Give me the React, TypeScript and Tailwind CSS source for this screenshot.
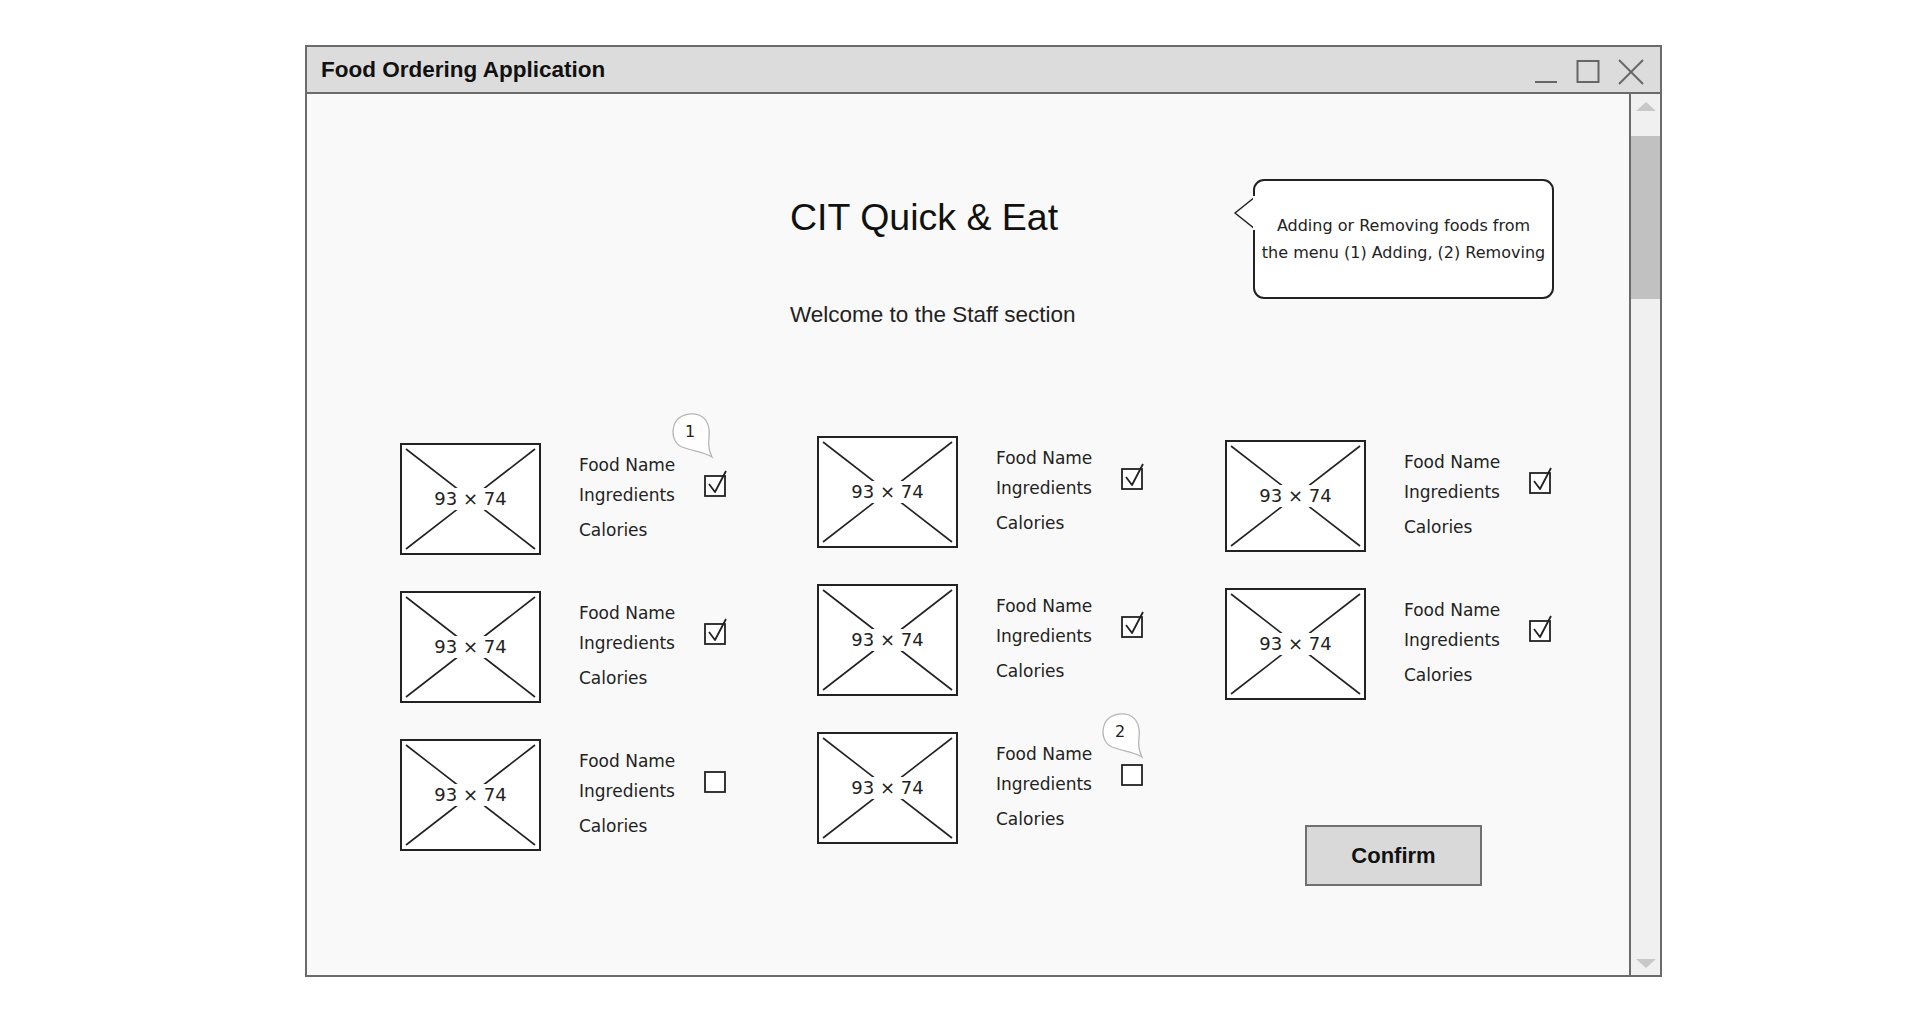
import React from 'react';

type Food = { checked: boolean; badge?: { n: string; cls: string } };

const columns: { offset: string; items: Food[] }[] = [
  {
    offset: 'mt-[7px]',
    items: [
      { checked: true, badge: { n: '1', cls: 'left-[270px] top-[-32px]' } },
      { checked: true },
      { checked: false },
    ],
  },
  {
    offset: 'mt-0',
    items: [
      { checked: true },
      { checked: true },
      { checked: false, badge: { n: '2', cls: 'left-[283px] top-[-21px]' } },
    ],
  },
  {
    offset: 'mt-[4px]',
    items: [{ checked: true }, { checked: true }],
  },
];

function Placeholder() {
  return (
    <div className="relative w-[141px] h-[112px] shrink-0 bg-white border-2 border-[#222]">
      <svg className="absolute inset-0" width="137" height="108" viewBox="0 0 137 108">
        <line x1="4" y1="4" x2="133" y2="104" stroke="#222" strokeWidth="1.6" />
        <line x1="133" y1="4" x2="4" y2="104" stroke="#222" strokeWidth="1.6" />
      </svg>
      <div className="absolute inset-0 flex items-center justify-center">
        <span className="bg-white px-[3px] leading-[22px] text-[18px] text-[#222] [font-family:'DejaVu_Sans',sans-serif]">
          93 × 74
        </span>
      </div>
    </div>
  );
}

function CheckBox({ checked }: { checked: boolean }) {
  return (
    <svg width="28" height="30" viewBox="0 0 28 30" className="overflow-visible">
      <rect x="1" y="8" width="20" height="20" fill="white" stroke="#222" strokeWidth="1.8" />
      {checked && (
        <path d="M5 16 L11 24 L22 3" fill="none" stroke="#222" strokeWidth="1.8" strokeLinejoin="round" />
      )}
    </svg>
  );
}

function Badge({ n }: { n: string }) {
  return (
    <div className="relative w-[46px] h-[48px]">
      <svg className="absolute inset-0" width="46" height="48" viewBox="0 0 46 48">
        <path
          d="M42 46 C34 41 22 40 12 36 C3 32 1 21 5 12 C9 4 20 1 29 4 C38 8 40 18 39 27 C38 34 39 40 42 46 Z"
          fill="white"
          stroke="#b5b5b5"
          strokeWidth="1.3"
        />
      </svg>
      <span className="absolute left-[15px] top-[9px] text-[16px] text-[#222] [font-family:'DejaVu_Sans',sans-serif]">
        {n}
      </span>
    </div>
  );
}

function FoodItem({ item }: { item: Food }) {
  return (
    <div className="relative flex h-[112px]">
      <Placeholder />
      <div className="ml-[38px] w-[125px] pt-[10px] text-[17px] leading-[24px] text-[#222] [font-family:'DejaVu_Sans',sans-serif]">
        <div>Food Name</div>
        <div className="mt-[6px]">Ingredients</div>
        <div className="mt-[11px]">Calories</div>
      </div>
      <div className="pt-[25px]">
        <CheckBox checked={item.checked} />
      </div>
      {item.badge && (
        <div className={`absolute ${item.badge.cls}`}>
          <Badge n={item.badge.n} />
        </div>
      )}
    </div>
  );
}

export default function App() {
  return (
    <div className="w-[1905px] h-[1019px] bg-white [font-family:'Liberation_Sans',Arial,sans-serif] pl-[305px] pt-[45px]">
      <div className="w-[1357px] h-[932px] border-2 border-[#6b6b6b] flex flex-col">
        {/* title bar */}
        <div className="h-[47px] bg-[#dcdcdc] border-b-2 border-[#6b6b6b] flex items-center pl-[14px] pr-[16px]">
          <span className="font-bold text-[22.5px] text-[#111]">Food Ordering Application</span>
          <div className="ml-auto flex items-center gap-[18px] pt-[4px]">
            <svg width="24" height="26" viewBox="0 0 24 26">
              <line x1="1" y1="23" x2="23" y2="23" stroke="#666" strokeWidth="2" />
            </svg>
            <svg width="24" height="26" viewBox="0 0 24 26">
              <rect x="1.5" y="2" width="21" height="21" fill="none" stroke="#666" strokeWidth="2" />
            </svg>
            <svg width="26" height="26" viewBox="0 0 26 26">
              <line x1="1" y1="1" x2="25" y2="25" stroke="#666" strokeWidth="2" />
              <line x1="25" y1="1" x2="1" y2="25" stroke="#666" strokeWidth="2" />
            </svg>
          </div>
        </div>

        <div className="flex flex-1 min-h-0">
          {/* main area */}
          <div className="relative flex-1 bg-[#f9f9f9]">
            <div className="pl-[483px] pt-[102px]">
              <h1 className="text-[37.5px] leading-[42px] text-[#111]">CIT Quick &amp; Eat</h1>
              <p className="mt-[64px] text-[22.5px] leading-[26px] text-[#222]">Welcome to the Staff section</p>
            </div>

            {/* help callout */}
            <div className="absolute left-[946px] top-[85px] w-[301px] h-[120px]">
              <svg className="absolute left-[-20px] top-[16px]" width="24" height="36" viewBox="0 0 24 36">
                <path d="M22 2 L2 18 L22 34" fill="white" stroke="#222" strokeWidth="1.6" strokeLinejoin="round" />
              </svg>
              <div className="w-full h-full bg-white border-2 border-[#222] rounded-[11px] flex items-center justify-center text-center text-[16px] leading-[27px] text-[#222] [font-family:'DejaVu_Sans',sans-serif]">
                <div>
                  Adding or Removing foods from
                  <br />
                  the menu (1) Adding, (2) Removing
                </div>
              </div>
              <div className="absolute left-0 top-[17px] w-[3px] h-[34px] bg-white" />
            </div>

            {/* food grid */}
            <div className="mt-[108px] pl-[93px] grid grid-cols-[417px_408px_1fr] items-start">
              {columns.map((col, ci) => (
                <div key={ci} className={`flex flex-col gap-[36px] ${col.offset}`}>
                  {col.items.map((item, ii) => (
                    <FoodItem key={ii} item={item} />
                  ))}
                  {ci === 2 && (
                    <button className="ml-[80px] mt-[89px] w-[177px] h-[61px] bg-[#d9d9d9] border-2 border-[#707070] text-[22px] font-bold text-[#111]">
                      Confirm
                    </button>
                  )}
                </div>
              ))}
            </div>
          </div>

          {/* scrollbar */}
          <div className="w-[31px] bg-[#f0f0f0] border-l-2 border-[#6b6b6b] flex flex-col">
            <div className="h-[42px] flex justify-center pt-[8px]">
              <div className="w-0 h-0 border-l-[10px] border-r-[10px] border-b-[9px] border-l-transparent border-r-transparent border-b-[#c8c8c8]" />
            </div>
            <div className="h-[163px] bg-[#c1c1c1]" />
            <div className="flex-1" />
            <div className="h-[22px] flex justify-center pt-[6px]">
              <div className="w-0 h-0 border-l-[10px] border-r-[10px] border-t-[9px] border-l-transparent border-r-transparent border-t-[#c8c8c8]" />
            </div>
          </div>
        </div>
      </div>
    </div>
  );
}
